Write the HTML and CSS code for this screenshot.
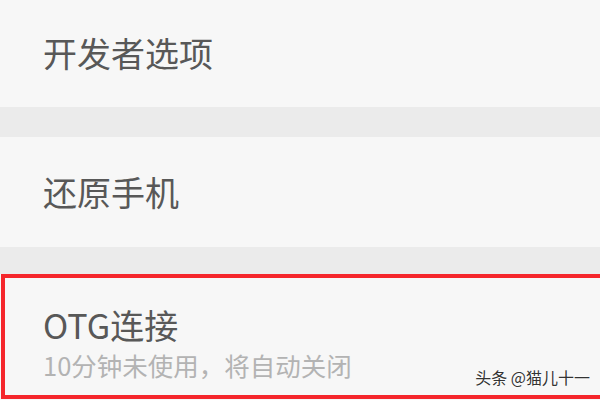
FILE: index.html
```html
<!DOCTYPE html>
<html lang="zh">
<head>
  <meta charset="UTF-8">
  <title>设置</title>
  <link rel="stylesheet" href="styles.css">
</head>
<body>
  <div class="list">
    <div class="item first">
      <span class="title">开发者选项</span>
    </div>
    <div class="divider"></div>
    <div class="item second">
      <span class="title">还原手机</span>
    </div>
    <div class="divider short"></div>
    <div class="item otg">
      <span class="title">OTG连接</span>
      <span class="summary">10分钟未使用，将自动关闭</span>
    </div>
  </div>
  <div class="watermark">头条 @猫儿十一</div>
</body>
</html>
```

FILE: styles.css
```css
body {
  margin: 0;
  background-color: #f7f7f7;
  font-family: "Noto Sans CJK SC", "Noto Sans", sans-serif;
  overflow: hidden;
}

.list {
  display: flex;
  flex-direction: column;
  width: 600px;
  height: 400px;
  overflow: hidden;
}

.item {
  background-color: #f7f7f7;
  padding-left: 43px;
  display: flex;
  flex-direction: column;
  justify-content: center;
  box-sizing: border-box;
  flex-shrink: 0;
}

.first {
  height: 107px;
}

.second {
  height: 110px;
}

.divider {
  height: 30px;
  background-color: #ebebeb;
  flex-shrink: 0;
}

.divider.short {
  height: 27px;
}

.title {
  font-size: 34px;
  color: #585858;
  line-height: 1.2;
}

.otg {
  height: 125px;
  margin-left: 1px;
  margin-right: -20px;
  padding-left: 38px;
  padding-top: 27px;
  justify-content: flex-start;
  border: 4px solid #f5262b;
}

.summary {
  font-size: 25.5px;
  color: #b3b3b3;
  margin-top: 4px;
  line-height: 1.2;
}

.watermark {
  position: absolute;
  right: 10px;
  bottom: 11px;
  font-size: 16px;
  color: #333;
  text-shadow: 0 0 2px #fff, 0 0 2px #fff;
}
```
